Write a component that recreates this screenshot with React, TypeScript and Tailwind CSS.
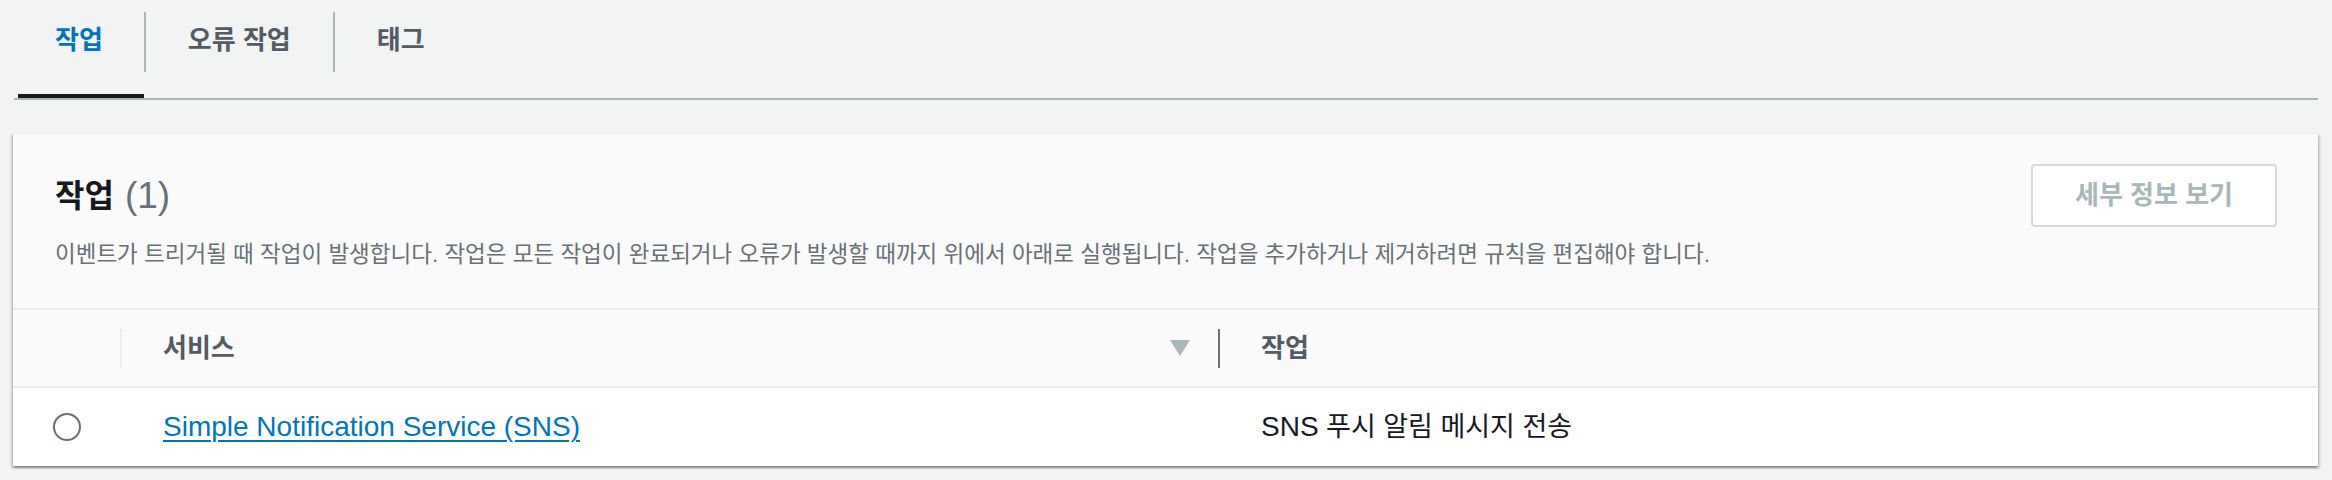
import React from "react";

const FONT = "font-['Liberation_Sans','Noto_Sans_CJK_KR',sans-serif]";

function Tabs() {
  return (
    <div className="ml-[14px] mr-[14px] flex h-[100px] items-start border-b-2 border-[#aab7b8] pl-[4px]">
      <div className="flex h-[98px] items-start border-b-4 border-[#16191f] pl-[37px] pr-[41px] pt-[25px]">
        <span className="text-[26px] font-bold leading-[30px] text-[#0073bb]">작업</span>
      </div>
      <div className="mt-[12px] h-[60px] w-[2px] bg-[#aab7b8]" />
      <div className="flex h-[98px] items-start px-[42px] pt-[25px]">
        <span className="text-[26px] font-bold leading-[30px] text-[#545b64]">오류 작업</span>
      </div>
      <div className="mt-[12px] h-[60px] w-[2px] bg-[#aab7b8]" />
      <div className="flex h-[98px] items-start px-[42px] pt-[25px]">
        <span className="text-[26px] font-bold leading-[30px] text-[#545b64]">태그</span>
      </div>
    </div>
  );
}

function SortDown() {
  return (
    <svg width="20" height="16" viewBox="0 0 20 16" className="block">
      <polygon points="0,0 20,0 10,16" fill="#aab7b8" />
    </svg>
  );
}

export default function App() {
  return (
    <div className={`h-[480px] w-[2332px] overflow-hidden bg-[#f2f3f3] ${FONT}`}>
      <Tabs />
      <div className="ml-[13px] mr-[14px] mt-[33px] border-t border-[#eaeded] bg-white shadow-[0_2px_2px_0_rgba(0,28,36,0.3),2px_2px_2px_0_rgba(0,28,36,0.15),-2px_2px_2px_0_rgba(0,28,36,0.15)]">
        {/* header */}
        <div className="flex items-start justify-between border-b-2 border-[#eaeded] bg-[#fafafa] px-[41px] pb-[38px] pt-[30px]">
          <div className="flex flex-col">
            <div className="flex h-[63px] items-center pl-[1px]">
              <h2 className="text-[32px] font-bold leading-[40px] text-[#16191f]">작업</h2>
              <span className="ml-[11px] text-[37px] leading-[40px] text-[#687078]">(1)</span>
            </div>
            <p className="mt-[13px] pl-[1px] text-[22.5px] leading-[30px] text-[#687078]">
              이벤트가 트리거될 때 작업이 발생합니다. 작업은 모든 작업이 완료되거나 오류가 발생할 때까지 위에서 아래로 실행됩니다. 작업을 추가하거나 제거하려면 규칙을 편집해야 합니다.
            </p>
          </div>
          <button
            type="button"
            disabled
            className="flex h-[63px] w-[246px] items-center justify-center rounded-[4px] border-2 border-[#d5dbdb] bg-white text-[26px] font-bold text-[#aab7b8]"
          >
            세부 정보 보기
          </button>
        </div>

        {/* table header */}
        <div className="flex h-[78px] items-center border-b-2 border-[#eaeded] bg-[#fafafa]">
          <div className="w-[107px]" />
          <div className="h-[39px] w-[2px] bg-[#eaeded]" />
          <div className="flex w-[1096px] items-center justify-between pl-[41px] pr-[28px]">
            <span className="text-[26px] font-bold leading-[30px] text-[#545b64]">서비스</span>
            <SortDown />
          </div>
          <div className="h-[39px] w-[2px] bg-[#687078]" />
          <div className="pl-[41px]">
            <span className="text-[26px] font-bold leading-[30px] text-[#545b64]">작업</span>
          </div>
        </div>

        {/* row */}
        <div className="flex h-[78px] items-center bg-white">
          <div className="flex w-[107px] justify-center pl-[1px]">
            <div className="h-[28px] w-[28px] rounded-full border-2 border-[#687078] bg-white" />
          </div>
          <div className="w-[1098px] pl-[43px]">
            <a href="#" className="text-[28px] leading-[34px] text-[#0073bb] underline decoration-[2px] underline-offset-[4px]">
              Simple Notification Service (SNS)
            </a>
          </div>
          <div className="pl-[43px] text-[#16191f]">
            <span className="text-[28px] leading-[34px]">SNS</span>
            <span className="text-[27px] leading-[34px]"> 푸시 알림 메시지 전송</span>
          </div>
        </div>
      </div>
    </div>
  );
}
